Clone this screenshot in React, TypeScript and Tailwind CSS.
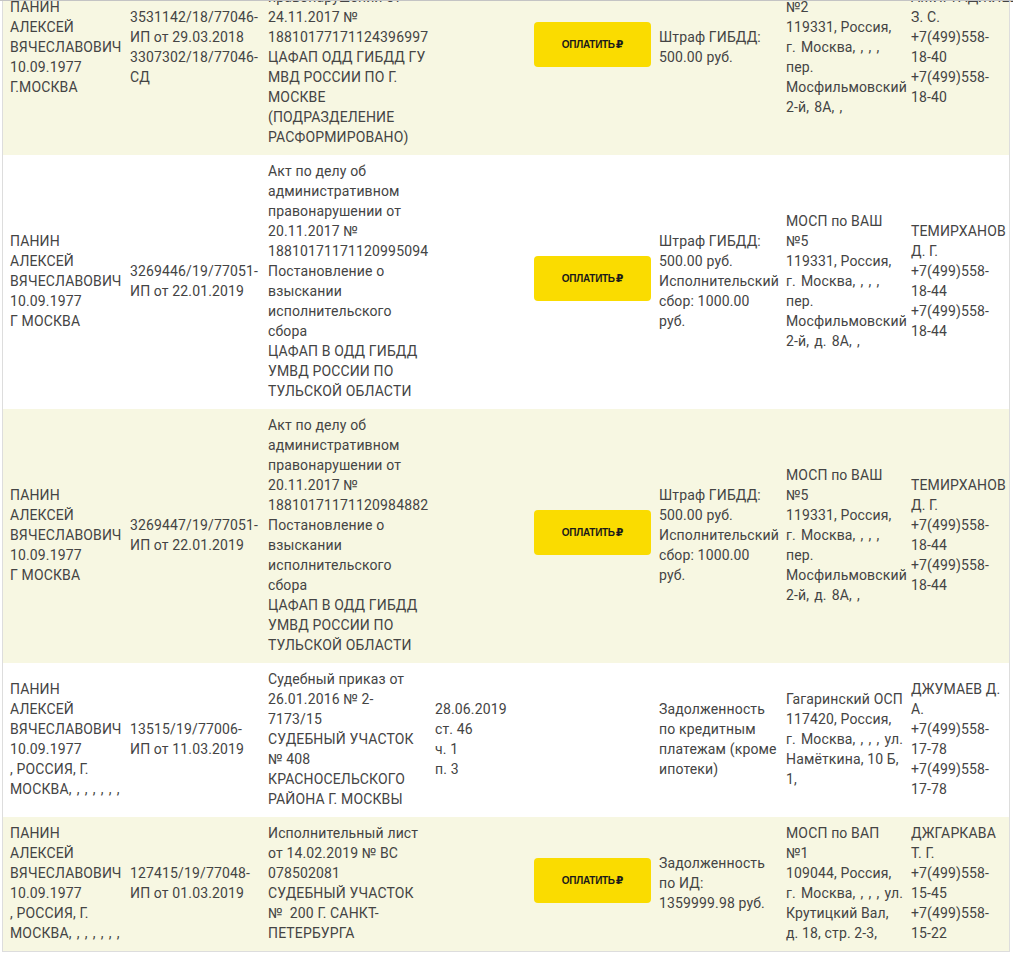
const rows = [
  {
    bg: "bg-[#f7f7e2]",
    h: "h-[214px]",
    pay: true,
    cells: [
      ["ПАНИН", "АЛЕКСЕЙ", "ВЯЧЕСЛАВОВИЧ", "10.09.1977", "Г.МОСКВА"],
      ["3531142/18/77046-", "ИП от 29.03.2018", "3307302/18/77046-", "СД"],
      ["Акт по делу об", "административном", "правонарушении от", "24.11.2017 №", "18810177171124396997", "ЦАФАП ОДД ГИБДД ГУ", "МВД РОССИИ ПО Г.", "МОСКВЕ", "(ПОДРАЗДЕЛЕНИЕ", "РАСФОРМИРОВАНО)"],
      [],
      ["Штраф ГИБДД:", "500.00 руб."],
      ["МОСП по ВАШ", "№2", "119331, Россия,", "г. Москва, , , ,", "пер.", "Мосфильмовский", "2-й, 8А, ,"],
      ["АМИРГАДЖИЕВА", "З. С.", "+7(499)558-", "18-40", "+7(499)558-", "18-40"],
    ],
  },
  {
    bg: "bg-white",
    h: "h-[254px]",
    pay: true,
    cells: [
      ["ПАНИН", "АЛЕКСЕЙ", "ВЯЧЕСЛАВОВИЧ", "10.09.1977", "Г МОСКВА"],
      ["3269446/19/77051-", "ИП от 22.01.2019"],
      ["Акт по делу об", "административном", "правонарушении от", "20.11.2017 №", "18810171171120995094", "Постановление о", "взыскании", "исполнительского", "сбора", "ЦАФАП В ОДД ГИБДД", "УМВД РОССИИ ПО", "ТУЛЬСКОЙ ОБЛАСТИ"],
      [],
      ["Штраф ГИБДД:", "500.00 руб.", "Исполнительский", "сбор: 1000.00", "руб."],
      ["МОСП по ВАШ", "№5", "119331, Россия,", "г. Москва, , , ,", "пер.", "Мосфильмовский", "2-й, д. 8А, ,"],
      ["ТЕМИРХАНОВ", "Д. Г.", "+7(499)558-", "18-44", "+7(499)558-", "18-44"],
    ],
  },
  {
    bg: "bg-[#f7f7e2]",
    h: "h-[254px]",
    pay: true,
    cells: [
      ["ПАНИН", "АЛЕКСЕЙ", "ВЯЧЕСЛАВОВИЧ", "10.09.1977", "Г МОСКВА"],
      ["3269447/19/77051-", "ИП от 22.01.2019"],
      ["Акт по делу об", "административном", "правонарушении от", "20.11.2017 №", "18810171171120984882", "Постановление о", "взыскании", "исполнительского", "сбора", "ЦАФАП В ОДД ГИБДД", "УМВД РОССИИ ПО", "ТУЛЬСКОЙ ОБЛАСТИ"],
      [],
      ["Штраф ГИБДД:", "500.00 руб.", "Исполнительский", "сбор: 1000.00", "руб."],
      ["МОСП по ВАШ", "№5", "119331, Россия,", "г. Москва, , , ,", "пер.", "Мосфильмовский", "2-й, д. 8А, ,"],
      ["ТЕМИРХАНОВ", "Д. Г.", "+7(499)558-", "18-44", "+7(499)558-", "18-44"],
    ],
  },
  {
    bg: "bg-white",
    h: "h-[154px]",
    pay: false,
    cells: [
      ["ПАНИН", "АЛЕКСЕЙ", "ВЯЧЕСЛАВОВИЧ", "10.09.1977", ", РОССИЯ, Г.", "МОСКВА, , , , , , ,"],
      ["13515/19/77006-", "ИП от 11.03.2019"],
      ["Судебный приказ от", "26.01.2016 № 2-", "7173/15", "СУДЕБНЫЙ УЧАСТОК", "№ 408", "КРАСНОСЕЛЬСКОГО", "РАЙОНА Г. МОСКВЫ"],
      ["28.06.2019", "ст. 46", "ч. 1", "п. 3"],
      ["Задолженность", "по кредитным", "платежам (кроме", "ипотеки)"],
      ["Гагаринский ОСП", "117420, Россия,", "г. Москва, , , , ул.", "Намёткина, 10 Б,", "1,"],
      ["ДЖУМАЕВ Д.", "А.", "+7(499)558-", "17-78", "+7(499)558-", "17-78"],
    ],
  },
  {
    bg: "bg-[#f7f7e2]",
    h: "h-[134px]",
    pay: true,
    cells: [
      ["ПАНИН", "АЛЕКСЕЙ", "ВЯЧЕСЛАВОВИЧ", "10.09.1977", ", РОССИЯ, Г.", "МОСКВА, , , , , , ,"],
      ["127415/19/77048-", "ИП от 01.03.2019"],
      ["Исполнительный лист", "от 14.02.2019 № ВС", "078502081", "СУДЕБНЫЙ УЧАСТОК", "№  200 Г. САНКТ-", "ПЕТЕРБУРГА"],
      [],
      ["Задолженность", "по ИД:", "1359999.98 руб."],
      ["МОСП по ВАП", "№1", "109044, Россия,", "г. Москва, , , , ул.", "Крутицкий Вал,", "д. 18, стр. 2-3,"],
      ["ДЖГАРКАВА", "Т. Г.", "+7(499)558-", "15-45", "+7(499)558-", "15-22"],
    ],
  },
];

function Cell({ lines }: { lines: string[] }) {
  return (
    <div className="flex flex-col justify-center pb-[2px] pl-2 whitespace-pre first:pl-[7px]">
      {lines.map((line, i) => (
        <div key={i} className={line.includes(", ,") ? "[word-spacing:1.5px]" : ""}>
          {line}
        </div>
      ))}
    </div>
  );
}

function PayButton() {
  return (
    <div className="flex items-center pl-2 pb-[7px]">
      <button className="flex h-[45px] w-[117px] items-center justify-center gap-[1px] rounded bg-[#fadc00] font-['Liberation_Sans',sans-serif] text-[10px] font-bold tracking-[-0.3px] text-[#1a1a1a]">
        ОПЛАТИТЬ
        <span className="font-['DejaVu_Sans',sans-serif] text-[11px] leading-none">₽</span>
      </button>
    </div>
  );
}

export default function App() {
  return (
    <div className="h-[954px] overflow-hidden bg-white">
      <div className="relative z-10 h-px bg-[#c4c4c4]" />
      <div className="ml-[2px] -mt-[60px] w-[1008px] border-x border-b border-[#dddddd] font-['Roboto',sans-serif] text-sm leading-5 tracking-[0.14px] text-[#444444]">
        {rows.map((row, i) => (
          <div
            key={i}
            className={`grid grid-cols-[119px_138px_167px_99px_125px_127px_125px_106px] ${row.bg} ${row.h}`}
          >
            <Cell lines={row.cells[0]} />
            <Cell lines={row.cells[1]} />
            <Cell lines={row.cells[2]} />
            <Cell lines={row.cells[3]} />
            {row.pay ? <PayButton /> : <div />}
            <Cell lines={row.cells[4]} />
            <Cell lines={row.cells[5]} />
            <Cell lines={row.cells[6]} />
          </div>
        ))}
      </div>
    </div>
  );
}
